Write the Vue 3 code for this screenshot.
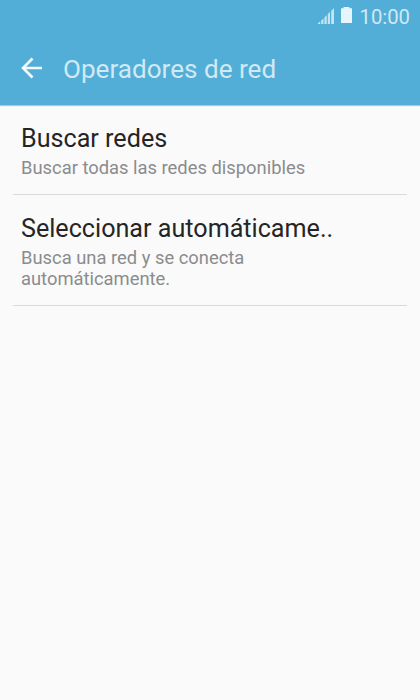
<template>
  <div class="screen">
    <header class="header">
      <div class="status-bar">
        <svg class="signal" width="17" height="16" viewBox="0 0 17 16">
          <path d="M0 16v-1l2.200-1.500V16zM3.200 16v-3.500l2.200-2V16zM6.400 16V9.500l2.300-2.300V16zM9.800 16V6.300l2.200-2.500V16zM13.200 16V3L16 0v16z" />
        </svg>
        <svg class="battery" width="11" height="16" viewBox="0 0 11 16">
          <path d="M2.500 0h6v1.200H11V16H0V1.200h2.500z" />
        </svg>
        <span class="clock">10:00</span>
      </div>
      <div class="title-bar">
        <button class="back-button" aria-label="Volver" @click="goBack">
          <svg width="22" height="22" viewBox="0 0 22 22">
            <path d="M21 11H2M11.500 1.500L2 11l9.500 9.500" />
          </svg>
        </button>
        <h1 class="title">Operadores de red</h1>
      </div>
    </header>

    <ul class="option-list">
      <li v-for="option in options" :key="option.id" class="option-item">
        <div class="option-name">{{ option.name }}</div>
        <div class="option-description">{{ option.description }}</div>
      </li>
    </ul>
  </div>
</template>

<script setup>
import { ref } from 'vue'

const emit = defineEmits(['back'])

const options = ref([
  { id: 1, name: 'Buscar redes', description: 'Buscar todas las redes disponibles' },
  { id: 2, name: 'Seleccionar automáticame..', description: 'Busca una red y se conecta automáticamente.' },
])

const goBack = () => {
  emit('back')
}
</script>

<style>
body {
  margin: 0;
  background-color: #fafafa;
}
</style>

<style scoped>
.screen {
  min-height: 100vh;
  background-color: #fafafa;
  font-family: Roboto, sans-serif;
}

.header {
  height: 105px;
  background-color: #52aed6;
  box-shadow: 0 1px 1px rgba(60, 70, 90, 0.3);
}

.status-bar {
  display: flex;
  align-items: center;
  justify-content: flex-end;
  height: 30px;
  padding-right: 10px;
  color: #d0e9f4;
  fill: #c4e4f1;
}

.signal {
  margin-top: 2px;
}

.battery {
  margin: 0 7px 0 6px;
  fill: #e6f5fb;
}

.clock {
  font-size: 20.3px;
  line-height: 25px;
  padding-top: 4px;
}

.title-bar {
  display: flex;
  align-items: center;
  height: 75px;
  padding-left: 21px;
}

.back-button {
  display: flex;
  padding: 0;
  border: none;
  background: none;
  cursor: pointer;
}

.back-button path {
  fill: none;
  stroke: #f4fafd;
  stroke-width: 2.6;
}

.title {
  margin: 0 0 0 20px;
  padding-top: 2px;
  font-size: 26.1px;
  font-weight: 400;
  line-height: 30px;
  color: #d0e9f4;
}

.option-list {
  margin: 0;
  padding: 0 13px;
  list-style: none;
}

.option-item {
  padding: 18px 90px 16px 8px;
  border-bottom: 1px solid #dadada;
}

.option-name {
  font-size: 25.15px;
  line-height: 32px;
  color: #252525;
  white-space: nowrap;
}

.option-description {
  margin-top: 2px;
  font-size: 18.36px;
  line-height: 21px;
  color: #8a8c8d;
}
</style>
